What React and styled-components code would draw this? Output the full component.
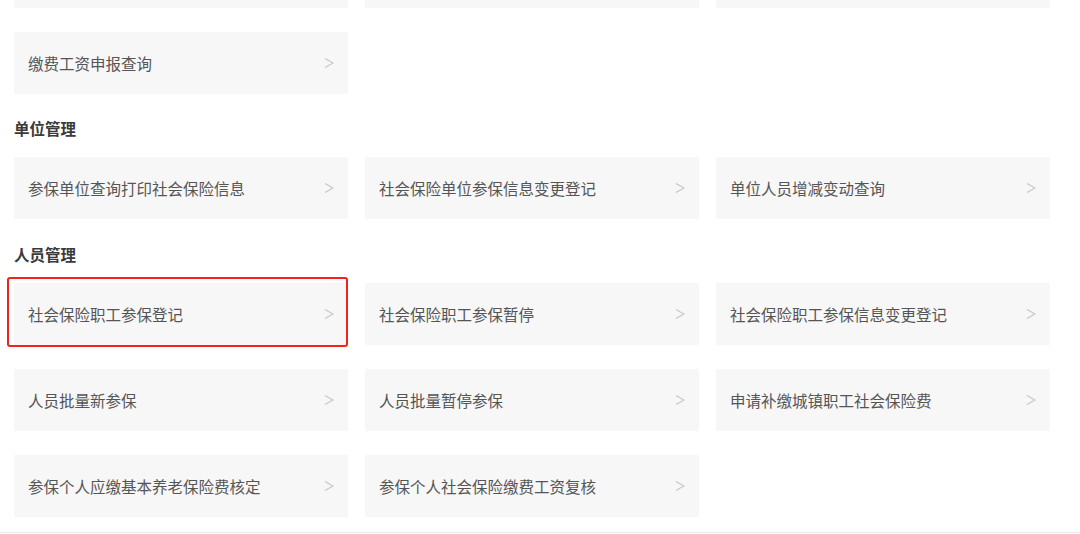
import React from 'react'
import styled, { createGlobalStyle } from 'styled-components'

const GlobalStyle = createGlobalStyle`
body {
  margin: 0;
  background: #fff;
  font-family: "Microsoft YaHei", "Noto Sans CJK SC", "Noto Sans", sans-serif;
  overflow: hidden;
}
`;

const Page = styled.div`
width: 1080px;
height: 534px;
overflow: hidden;
`;

const Scroller = styled.div`
margin-top: -54px;
padding-left: 14px;
`;

const Heading = styled.h3`
margin: 0;
padding: ${({ $top }) => $top}px 0 19px;
font-size: 15.5px;
line-height: 20px;
font-weight: 700;
color: #3a3a3a;
`;

const Grid = styled.div`
display: grid;
grid-template-columns: repeat(3, 334px);
column-gap: 17px;
row-gap: 24px;
`;

const Card = styled.div`
position: relative;
height: 62px;
box-sizing: border-box;
padding: 0 14px;
display: flex;
align-items: center;
justify-content: space-between;
background: #f7f7f7;
color: #555;
font-size: 15.5px;
cursor: pointer;
`;

const Highlight = styled.div`
position: absolute;
left: -7px;
top: -6px;
right: 0;
bottom: -2px;
border: 2px solid #f5211b;
border-radius: 3px;
pointer-events: none;
`;

const Divider = styled.div`
margin-top: 15px;
margin-left: -14px;
height: 1px;
background: #e9e9e9;
`;

const Chevron = () => (
  <svg width="10" height="12" viewBox="0 0 10 12">
    <polyline points="1,1.5 9,6 1,10.5" fill="none" stroke="#c4c4c4" strokeWidth="1.1" />
  </svg>
)

const sections = [
  { title: '', top: 0, items: ['', '', '', '缴费工资申报查询'] },
  { title: '单位管理', top: 24, items: ['参保单位查询打印社会保险信息', '社会保险单位参保信息变更登记', '单位人员增减变动查询'] },
  {
    title: '人员管理',
    top: 25,
    items: [
      '社会保险职工参保登记', '社会保险职工参保暂停', '社会保险职工参保信息变更登记',
      '人员批量新参保', '人员批量暂停参保', '申请补缴城镇职工社会保险费',
      '参保个人应缴基本养老保险费核定', '参保个人社会保险缴费工资复核',
    ],
  },
]

export default function App() {
  return (
    <Page>
      <GlobalStyle />
      <Scroller>
        {sections.map((s, i) => (
          <div key={i}>
            {s.title && <Heading $top={s.top}>{s.title}</Heading>}
            <Grid>
              {s.items.map((t, j) => (
                <Card key={j}>
                  <span>{t}</span>
                  <Chevron />
                  {s.title === '人员管理' && j === 0 && <Highlight />}
                </Card>
              ))}
            </Grid>
          </div>
        ))}
        <Divider />
      </Scroller>
    </Page>
  )
}
